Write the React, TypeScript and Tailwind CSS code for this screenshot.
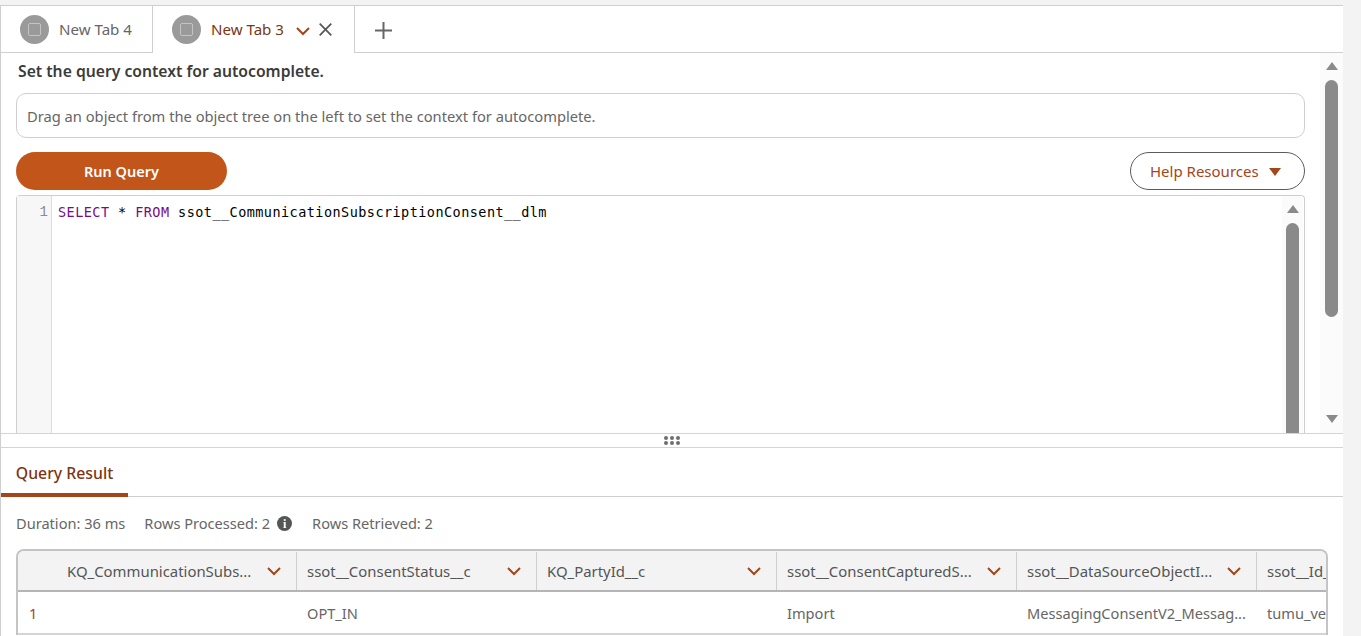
const columns = [
  { title: "KQ_CommunicationSubs...", cell: "1", width: "w-[279px]", pad: "pl-[49px]" },
  { title: "ssot__ConsentStatus__c", cell: "OPT_IN", width: "w-[240px]" },
  { title: "KQ_PartyId__c", cell: "", width: "w-[240px]" },
  { title: "ssot__ConsentCapturedS...", cell: "Import", width: "w-[240px]" },
  { title: "ssot__DataSourceObjectI...", cell: "MessagingConsentV2_Messag...", width: "w-[240px]" },
  { title: "ssot__Id_", cell: "tumu_ve", width: "w-[70px]", last: true },
];

function Chevron({ className = "" }: { className?: string }) {
  return (
    <svg viewBox="0 0 14 9" fill="none" className={`h-[9px] w-[14px] shrink-0 ${className}`}>
      <path d="M1 1l6 6 6-6" stroke="#a4451a" strokeWidth="2" />
    </svg>
  );
}

function TabBadge() {
  return (
    <span className="flex h-[29px] w-[29px] shrink-0 items-center justify-center rounded-full bg-[#9a9a9a]">
      <span className="h-[13px] w-[13px] rounded-[2px] border-[1.5px] border-[#c4c4c4]" />
    </span>
  );
}

function ScrollUp() {
  return <span className="h-0 w-0 border-x-[6px] border-b-[8px] border-x-transparent border-b-[#8a8a8a]" />;
}

function ScrollDown() {
  return <span className="block h-0 w-0 border-x-[6px] border-t-[8px] border-x-transparent border-t-[#8a8a8a]" />;
}

function HeaderCell({ col }: { col: (typeof columns)[number] }) {
  return (
    <div className={`${col.width} relative flex h-full shrink-0 items-center justify-between overflow-hidden pt-[1px] ${col.last ? "pr-0" : "pr-[16px]"} ${col.pad ?? "pl-[10px]"}`}>
      <span className="whitespace-nowrap text-[14.9px] text-[#555]">{col.title}</span>
      {!col.last && <Chevron />}
      {!col.last && <span className="absolute right-0 top-[1px] h-[38px] w-px bg-[#cfcfcf]" />}
    </div>
  );
}

export default function App() {
  return (
    <div className="flex h-[636px] w-[1361px] flex-col overflow-hidden bg-[#f3f3f3] pt-[5px] font-['Noto_Sans',sans-serif] text-[#555]">
      <div className="flex h-[631px] w-[1343px] flex-col border-l border-t border-[#cfcfcf] bg-white">
        {/* tabs */}
        <div className="flex h-[47px] shrink-0 border-b border-[#cfcfcf]">
          <div className="flex h-[47px] w-[152px] items-center gap-[10px] border-b border-r border-[#cfcfcf] pl-[19px]">
            <TabBadge />
            <span className="text-[15.1px] text-[#666]">New Tab 4</span>
          </div>
          <div className="flex h-[47px] w-[202px] items-center border-r border-[#cfcfcf] bg-white pl-[19px]">
            <TabBadge />
            <span className="ml-[10px] text-[15.1px] text-[#7c3512]">New Tab 3</span>
            <Chevron className="ml-[12px] mt-[3px]" />
            <svg viewBox="0 0 13 13" fill="none" className="ml-[9px] h-[13px] w-[13px]">
              <path d="M.7.7l11.6 11.6M12.3.7L.7 12.3" stroke="#555" strokeWidth="1.7" />
            </svg>
          </div>
          <div className="flex w-[57px] items-center justify-center pt-[3px]">
            <svg viewBox="0 0 17 17" fill="none" className="h-[17px] w-[17px]">
              <path d="M8.5 0v17M0 8.5h17" stroke="#666" strokeWidth="2" />
            </svg>
          </div>
        </div>

        {/* query panel */}
        <div className="flex h-[381px] shrink-0 border-b border-[#d4d4d4]">
          <div className="flex min-w-0 flex-1 flex-col px-[15px]">
            <h2 className="mt-[6px] pl-[2px] text-[15.7px] font-semibold leading-[24px] text-[#3b3b3b]">
              Set the query context for autocomplete.
            </h2>
            <div className="mt-[10px] flex h-[45px] shrink-0 items-center rounded-[10px] border border-[#cfcfcf] px-[10px] pt-[1px] text-[14.7px] text-[#666]">
              Drag an object from the object tree on the left to set the context for autocomplete.
            </div>
            <div className="mt-[14px] flex h-[38px] shrink-0 items-center justify-between">
              <button className="h-[38px] w-[211px] rounded-full bg-[#c1551a] pt-[1px] text-[14.5px] font-semibold text-white">
                Run Query
              </button>
              <button className="flex h-[38px] w-[175px] items-center gap-[10px] rounded-full border border-[#5c5c5c] pl-[19px] text-[15px] text-[#a4451a]">
                Help Resources
                <span className="mt-[2px] h-0 w-0 border-x-[6.5px] border-t-[8px] border-x-transparent border-t-[#a4451a]" />
              </button>
            </div>
            {/* editor */}
            <div className="mt-[5px] flex min-h-0 flex-1 rounded-t-[4px] border-x border-t border-[#cfcfcf]">
              <div className="flex w-[35px] shrink-0 justify-end border-r border-[#dcdcdc] bg-[#f7f7f7] pr-[3px] pt-[7px] font-['Liberation_Mono',monospace] text-[14px] leading-[19px] text-[#8a8a8a]">
                1
              </div>
              <div className="min-w-0 flex-1 whitespace-pre pl-[6px] pt-[7px] font-['DejaVu_Sans_Mono',monospace] text-[13.5px] leading-[19px] tracking-[0.45px] text-black">
                <span className="text-[#7b0a86]">SELECT</span> * <span className="text-[#7b0a86]">FROM</span> ssot__CommunicationSubscriptionConsent__dlm
              </div>
              <div className="flex w-[21px] shrink-0 flex-col items-center bg-[#fbfbfb] pt-[9px]">
                <ScrollUp />
                <span className="mt-[10px] w-[13px] flex-1 rounded-t-[7px] bg-[#8a8a8a]" />
              </div>
              <div className="w-px shrink-0" />
            </div>
          </div>
          <div className="flex w-[23px] shrink-0 flex-col items-center bg-[#fbfbfb] pt-[9px]">
            <ScrollUp />
            <span className="mt-[10px] h-[237px] w-[13px] rounded-[7px] bg-[#8a8a8a]" />
            <span className="mt-[98px]">
              <ScrollDown />
            </span>
          </div>
        </div>

        {/* splitter */}
        <div className="flex h-[14px] shrink-0 items-center justify-center border-b border-[#d4d4d4]">
          <div className="grid grid-cols-3 gap-x-[2px] gap-y-[1px]">
            {[0, 1, 2, 3, 4, 5].map((i) => (
              <span key={i} className="h-[4px] w-[4px] rounded-full bg-[#6e6e6e]" />
            ))}
          </div>
        </div>

        {/* result tabs */}
        <div className="flex h-[49px] shrink-0 border-b border-[#cfcfcf]">
          <div className="flex h-[49px] w-[127px] items-center justify-center border-b-[4px] border-[#a4451a] pt-[6px] text-[15.8px] font-medium text-[#7c3512]">
            Query Result
          </div>
        </div>

        {/* stats */}
        <div className="flex h-[52px] shrink-0 items-center pl-[15px] pt-[1px] text-[14.6px] text-[#666]">
          <span>Duration: 36 ms</span>
          <span className="ml-[19px]">Rows Processed: 2</span>
          <span className="ml-[7px] flex h-[15px] w-[15px] items-center justify-center rounded-full bg-[#555] font-['Liberation_Serif',serif] text-[12px] font-bold leading-none text-white">
            i
          </span>
          <span className="ml-[20px]">Rows Retrieved: 2</span>
        </div>

        {/* table */}
        <div className="ml-[15px] w-[1312px] shrink-0 overflow-hidden rounded-t-[8px] border-x-2 border-t-2 border-[#c4c4c4]">
          <div className="flex h-[41px] items-center border-b-2 border-[#b5b5b5] bg-[#f3f3f3]">
            {columns.map((col) => (
              <HeaderCell key={col.title} col={col} />
            ))}
          </div>
          <div className="flex h-[43px] items-center border-b-2 border-[#d4d4d4] bg-white pt-[2px]">
            {columns.map((col) => (
              <div
                key={col.title}
                className={`${col.width} shrink-0 overflow-hidden whitespace-nowrap text-[14.6px] ${col.cell === "1" ? "pl-[11px] text-[#a4451a]" : "pl-[10px] text-[#666]"}`}
              >
                {col.cell}
              </div>
            ))}
          </div>
        </div>
      </div>
    </div>
  );
}
